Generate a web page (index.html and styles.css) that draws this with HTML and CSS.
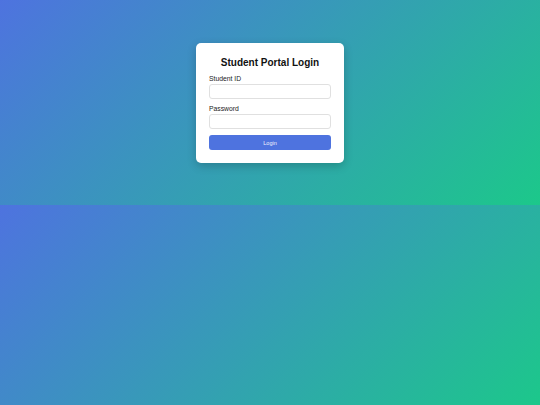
FILE: index.html
```html
<!DOCTYPE html>
<html>
<head>
<meta charset="utf-8">
<link rel="stylesheet" href="styles.css">
</head>
<body>
<div class="card">
  <h1 class="title">Student Portal Login</h1>
  <form class="form">
    <label class="label" for="sid">Student ID</label>
    <input class="input" id="sid" type="text">
    <label class="label label-gap" for="pw">Password</label>
    <input class="input" id="pw" type="password">
    <button class="btn" type="button">Login</button>
  </form>
</div>
</body>
</html>
```
FILE: styles.css
```css
html {
  margin: 0;
}
body {
  margin: 0;
  height: 205px;
  display: flex;
  justify-content: center;
  align-items: center;
  background: linear-gradient(135deg, #4e73df, #1cc88a);
  font-family: "Liberation Sans", Arial, sans-serif;
}
.card {
  width: 148px;
  height: 120px;
  box-sizing: border-box;
  background: #fff;
  border-radius: 5px;
  padding: 14px 13px 12px;
  box-shadow: 0 3px 10px rgba(0, 0, 0, 0.2);
}
.title {
  margin: 0 0 6px;
  text-align: center;
  font-size: 10px;
  font-weight: bold;
  color: #111;
  line-height: 12px;
}
.form {
  display: flex;
  flex-direction: column;
}
.label {
  font-size: 6.8px;
  color: #222;
  line-height: 8px;
  margin-bottom: 1.5px;
}
.label-gap {
  margin-top: 5.5px;
}
.input {
  height: 15px;
  box-sizing: border-box;
  border: 1px solid #e0e0e0;
  border-radius: 3px;
  margin: 0;
  padding: 0 4px;
  font-size: 7px;
}
.btn {
  margin-top: 6px;
  height: 15px;
  border: none;
  border-radius: 3px;
  background: #4e73df;
  color: #eef1fc;
  font-family: "Liberation Sans", Arial, sans-serif;
  font-size: 5.5px;
  padding: 0;
}
```
